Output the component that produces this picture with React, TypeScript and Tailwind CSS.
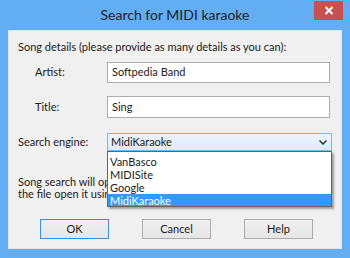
import React from 'react';

const font = { fontFamily: 'Lato, "Noto Sans", sans-serif' };

function Button({ label, primary }: { label: string; primary?: boolean }) {
  return (
    <div
      className={`w-[69px] h-[20px] flex items-center justify-center text-[11px] text-[#1a1a1a] bg-gradient-to-b from-[#f0f0f0] to-[#e5e5e5] border ${
        primary ? 'border-[#3c8ce0]' : 'border-[#acacac]'
      }`}
    >
      {label}
    </div>
  );
}

export default function App() {
  const engines = ['VanBasco', 'MIDISite', 'Google', 'MidiKaraoke'];

  return (
    <div className="w-[350px] h-[258px] bg-[#63aef2] flex flex-col" style={font}>
      {/* Title bar */}
      <div className="relative h-[30px] flex items-center justify-center">
        <span className="text-[14px] text-[#222] pb-[1px]">Search for MIDI karaoke</span>
        <div className="absolute top-[1px] right-[7px] w-[29px] h-[19px] bg-[#c75050] flex items-center justify-center">
          <svg width="10" height="9" viewBox="0 0 10 9">
            <path d="M1.5 1 L8.5 8 M8.5 1 L1.5 8" stroke="white" strokeWidth="2" />
          </svg>
        </div>
      </div>

      {/* Client area */}
      <div className="mx-[8px] w-[334px] h-[219px] bg-[#f0f0f0] border border-[#d9e6f2] text-[11px] text-[#1a1a1a] relative">
        <div className="pl-[9px] pt-[9px] flex flex-col">
          <div className="h-[14px] leading-[14px] whitespace-nowrap">Song details (please provide as many details as you can):</div>

          <div className="mt-[8px] h-[21px] flex items-center">
            <span className="w-[89px] pl-[17px]">Artist:</span>
            <div className="w-[223px] h-[21px] bg-white border border-[#abadb3] flex items-center pl-[4px]">Softpedia Band</div>
          </div>

          <div className="mt-[13px] h-[22px] flex items-center">
            <span className="w-[89px] pl-[17px]">Title:</span>
            <div className="w-[223px] h-[22px] bg-white border border-[#abadb3] flex items-center pl-[4px]">Sing</div>
          </div>

          <div className="mt-[15px] h-[18px] flex items-center">
            <span className="w-[89px]">Search engine:</span>
            <div className="relative w-[225px] h-[18px] bg-gradient-to-b from-[#ecf4fc] to-[#dcecfc] border border-[#7eb4ea] flex items-center pl-[3px]">
              MidiKaraoke
              <svg className="absolute right-[4px] top-[6px]" width="8" height="5" viewBox="0 0 8 5">
                <path d="M0.5 0.5 L4 4 L7.5 0.5" stroke="#333" strokeWidth="1.5" fill="none" />
              </svg>
              {/* Open list */}
              <div className="absolute left-[-1px] top-[17px] w-[225px] pt-[3px] bg-white border border-[#646464] shadow-[2px_2px_2px_rgba(0,0,0,0.35)] z-10 flex flex-col">
                {engines.map((e, i) => (
                  <div
                    key={e}
                    className={`leading-[13px] pl-[2px] ${
                      i === engines.length - 1 ? 'h-[12px] leading-[12px] bg-[#3399ff] text-white' : 'h-[13px]'
                    }`}
                  >
                    {e}
                  </div>
                ))}
              </div>
            </div>
          </div>

          <div className="mt-[25px] leading-[12px] w-[89px] overflow-hidden whitespace-nowrap">
            <div>Song search will open the web page. If you download</div>
            <div>the file open it using the player.</div>
          </div>

          <div className="mt-[19px] pl-[22px] flex gap-[33px]">
            <Button label="OK" primary />
            <Button label="Cancel" />
            <Button label="Help" />
          </div>
        </div>
      </div>
    </div>
  );
}
